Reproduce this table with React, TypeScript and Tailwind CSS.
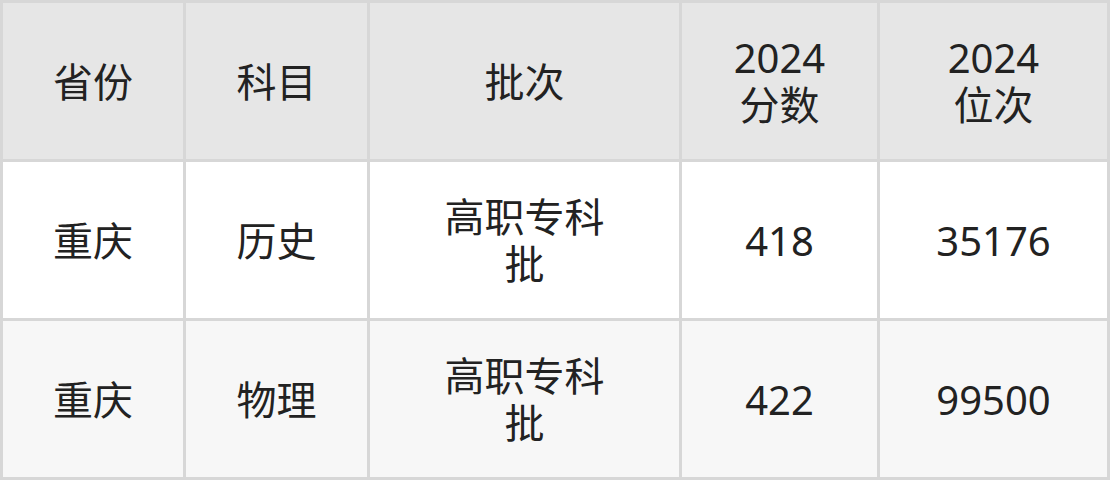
const header = ["省份", "科目", "批次", "2024\n分数", "2024\n位次"];

const rows = [
  ["重庆", "历史", "高职专科\n批", "418", "35176"],
  ["重庆", "物理", "高职专科\n批", "422", "99500"],
];

function Cell({ text, bg }: { text: string; bg: string }) {
  return (
    <div className={`flex items-center justify-center text-center ${bg}`}>
      <div className="whitespace-pre-line text-[40px] leading-[47px] text-[#222222]">{text}</div>
    </div>
  );
}

export default function App() {
  return (
    <div
      className="w-[1110px] h-[480px] bg-white"
      style={{ fontFamily: '"Noto Sans", "Noto Sans CJK SC", sans-serif' }}
    >
      <div className="grid grid-cols-[180px_181px_309px_195px_227px] grid-rows-[156px_156px_156px] gap-[3px] p-[3px] bg-[#d7d7d7]">
        {header.map((h, i) => (
          <Cell key={`h${i}`} text={h} bg="bg-[#e6e6e6]" />
        ))}
        {rows[0].map((c, i) => (
          <Cell key={`a${i}`} text={c} bg="bg-white" />
        ))}
        {rows[1].map((c, i) => (
          <Cell key={`b${i}`} text={c} bg="bg-[#f7f7f7]" />
        ))}
      </div>
    </div>
  );
}
